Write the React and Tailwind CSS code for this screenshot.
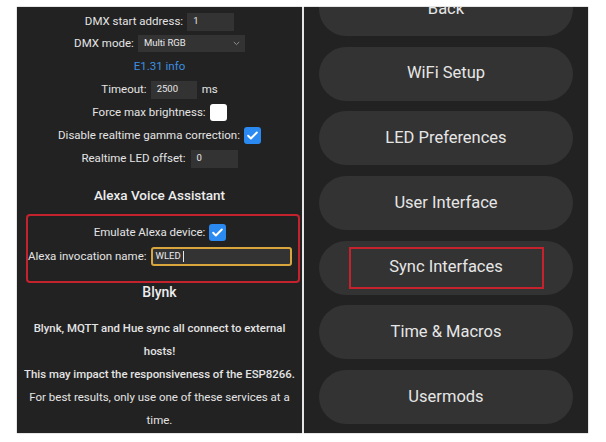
import React from "react";

function Check({ checked }) {
  if (!checked) {
    return <span className="inline-block w-[17px] h-[17px] rounded-[3px] bg-white shrink-0" />;
  }
  return (
    <span className="inline-flex w-[17px] h-[17px] rounded-[3px] bg-[#2b8af1] items-center justify-center shrink-0">
      <svg width="13" height="13" viewBox="0 0 24 24" fill="none">
        <path d="M4 12.5l5 5L20 6.5" stroke="white" strokeWidth="3.6" strokeLinecap="round" strokeLinejoin="round" />
      </svg>
    </span>
  );
}

function Input({ value, w }) {
  return (
    <span className={`inline-flex items-center h-[18px] bg-[#333333] text-[9.5px] text-[#e8e8e8] pl-[6px] ${w}`}>
      {value}
    </span>
  );
}

function Row({ children, h = "h-[23px]", gap = "gap-[4px]" }) {
  return <div className={`flex items-center justify-center ${h} ${gap} whitespace-nowrap`}>{children}</div>;
}

const buttons = ["Back", "WiFi Setup", "LED Preferences", "User Interface", "Sync Interfaces", "Time & Macros", "Usermods"];

export default function App() {
  return (
    <div
      className="w-[606px] h-[442px] bg-white flex gap-[2px] pl-[17px] pt-[7px]"
      style={{ fontFamily: "Roboto, 'Noto Sans', sans-serif" }}
    >
      {/* Left panel */}
      <div className="w-[285px] h-[426px] bg-[#222222] overflow-hidden flex flex-col pt-[4px] text-[11.5px] text-[#e4e4e4] shadow-[0_0_1px_rgba(0,0,0,0.6)]">
        <Row h="h-[21px]">
          <span>DMX start address:</span>
          <Input value="1" w="w-[47px]" />
        </Row>
        <Row>
          <span>DMX mode:</span>
          <span className="inline-flex items-center justify-between h-[17px] w-[107px] bg-[#333333] text-[9.5px] text-[#e8e8e8] pl-[6px] pr-[5px]">
            <span>Multi RGB</span>
            <svg width="7" height="5" viewBox="0 0 7 5" fill="none">
              <path d="M0.8 1l2.7 2.6L6.2 1" stroke="#9a9a9a" strokeWidth="0.9" />
            </svg>
          </span>
        </Row>
        <Row>
          <span className="text-[#3d8fe0]">E1.31 info</span>
        </Row>
        <Row>
          <span>Timeout:</span>
          <Input value="2500" w="w-[46px]" />
          <span className="ml-[1px]">ms</span>
        </Row>
        <Row>
          <span>Force max brightness:</span>
          <Check checked={false} />
        </Row>
        <Row>
          <span>Disable realtime gamma correction:</span>
          <Check checked />
        </Row>
        <Row gap="gap-[5px]">
          <span>Realtime LED offset:</span>
          <Input value="0" w="w-[47px]" />
        </Row>
        <div className="pt-[15px] pb-[9px] leading-[20px] text-center text-[13.5px] font-medium text-[#ececec]">
          Alexa Voice Assistant
        </div>
        <div className="ml-[9px] w-[274px] h-[69px] border-2 border-[#c4222d] rounded-[4px] pt-[5px] pr-[6px] flex flex-col">
          <Row>
            <span>Emulate Alexa device:</span>
            <Check checked />
          </Row>
          <Row h="h-[25px]">
            <span>Alexa invocation name:</span>
            <span className="inline-flex items-center h-[19px] w-[143px] border-2 border-[#d9a63e] rounded-[3px] bg-[#333333] text-[9.5px] text-[#ececec] pl-[3px]">
              WLED
              <span className="inline-block w-[1px] h-[11px] bg-[#e8e8e8] ml-[2px]" />
            </span>
          </Row>
        </div>
        <div className="leading-[18px] text-center text-[14px] font-medium text-[#ececec]">Blynk</div>
        <div className="mt-[16px] flex flex-col items-center text-[11.4px] leading-[23px] whitespace-nowrap">
          <span className="font-medium">Blynk, MQTT and Hue sync all connect to external</span>
          <span className="font-medium">hosts!</span>
          <span className="font-medium">This may impact the responsiveness of the ESP8266.</span>
          <span className="text-[11.5px]">For best results, only use one of these services at a</span>
          <span className="text-[11.5px]">time.</span>
        </div>
      </div>

      {/* Right panel */}
      <div className="relative w-[284px] h-[426px] bg-[#222222] overflow-hidden shadow-[0_0_1px_rgba(0,0,0,0.6)]">
        <div className="flex flex-col gap-[10.7px] mt-[-25px] px-[15px]">
          {buttons.map((b) => (
            <div
              key={b}
              className="h-[54px] rounded-full bg-[#333333] flex items-center justify-center text-[16.5px] text-[#e6e6e6]"
            >
              {b === "Sync Interfaces" ? (
                <span className="w-[195px] h-[42px] border-2 border-[#c4222d] flex items-center justify-center">
                  {b}
                </span>
              ) : (
                b
              )}
            </div>
          ))}
        </div>
      </div>
    </div>
  );
}
